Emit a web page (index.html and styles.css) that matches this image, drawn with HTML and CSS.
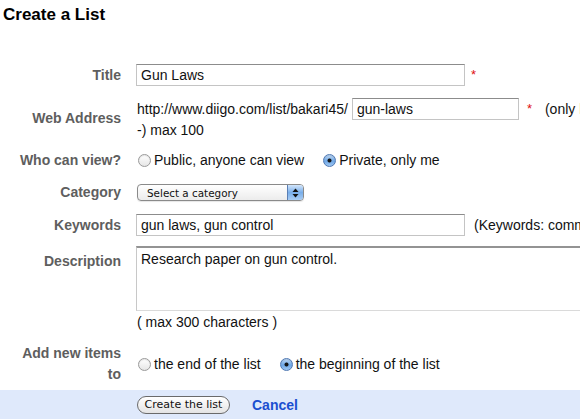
FILE: index.html
```html
<!DOCTYPE html>
<html>
<head>
<meta charset="utf-8">
<title>Create a List</title>
<link rel="stylesheet" href="styles.css">
</head>
<body>
<div class="page">
  <h1 class="heading">Create a List</h1>
  <div class="form">
    <div class="row row-title">
      <div class="lbl">Title</div>
      <div class="field">
        <input class="text wide" type="text" value="Gun Laws">
        <span class="req">*</span>
      </div>
    </div>

    <div class="row row-web">
      <div class="lbl">Web Address</div>
      <div class="field-block">
        <div class="line1">
          <span>http://www.diigo.com/list/bakari45/</span>
          <input class="text slug" type="text" value="gun-laws">
          <span class="req req-web">*</span>
          <span class="hint">(only letters, numbers, _ and</span>
        </div>
        <div class="line2">-) max 100</div>
      </div>
    </div>

    <div class="row row-who">
      <div class="lbl">Who can view?</div>
      <div class="field">
        <span class="opt"><span class="radio"></span><span>Public, anyone can view</span></span>
        <span class="opt opt-next"><span class="radio on"></span><span>Private, only me</span></span>
      </div>
    </div>

    <div class="row row-cat">
      <div class="lbl">Category</div>
      <div class="field">
        <div class="select">
          <span class="select-text">Select a category</span>
          <span class="select-btn">
            <svg width="7" height="10" viewBox="0 0 7 10"><path d="M3.5 0.5 L6.5 4 L0.5 4 Z" fill="#111"/><path d="M3.5 9.5 L6.5 6 L0.5 6 Z" fill="#111"/></svg>
          </span>
        </div>
      </div>
    </div>

    <div class="row row-kw">
      <div class="lbl">Keywords</div>
      <div class="field">
        <input class="text wide" type="text" value="gun laws, gun control">
        <span class="hint hint-kw">(Keywords: comma separated)</span>
      </div>
    </div>

    <div class="row row-desc">
      <div class="lbl lbl-desc">Description</div>
      <div class="field">
        <textarea class="area">Research paper on gun control.</textarea>
      </div>
    </div>

    <div class="row row-max">
      <div class="lbl"></div>
      <div class="field">( max 300 characters )</div>
    </div>

    <div class="row row-add">
      <div class="lbl lbl-add">Add new items<br>to</div>
      <div class="field">
        <span class="opt"><span class="radio"></span><span>the end of the list</span></span>
        <span class="opt opt-next"><span class="radio on"></span><span>the beginning of the list</span></span>
      </div>
    </div>
  </div>

  <div class="footer">
    <button class="btn" type="button">Create the list</button>
    <a class="cancel" href="#">Cancel</a>
  </div>
</div>
</body>
</html>
```

FILE: styles.css
```css
* {
  box-sizing: border-box;
}

body {
  margin: 0;
  font-family: "Liberation Sans", Arial, sans-serif;
  font-size: 14px;
  color: #111;
  background: #fff;
}

.page {
  width: 580px;
  height: 419px;
  overflow: hidden;
}

.heading {
  margin: 0;
  padding: 5px 3px 0;
  height: 25px;
  font-size: 17px;
  line-height: 20px;
  font-weight: bold;
  color: #000;
}

.form {
  margin-top: 39px;
}

.row {
  display: flex;
  align-items: center;
  white-space: nowrap;
}

.lbl {
  flex: 0 0 122px;
  padding-right: 1px;
  text-align: right;
  font-weight: bold;
  color: #5e5e5e;
  line-height: 17px;
}

.field {
  margin-left: 14px;
  display: flex;
  align-items: center;
}

.field-block {
  margin-left: 14px;
}

.text {
  height: 22px;
  margin: 0;
  padding: 0 4px;
  border: 1px solid #c4c4c4;
  border-top-color: #8c8c8c;
  border-radius: 0;
  font-family: "Liberation Sans", Arial, sans-serif;
  font-size: 14px;
  color: #111;
  background: #fff;
  outline: none;
}

.wide {
  width: 329px;
}

.req {
  color: #e01010;
  font-size: 13px;
  margin-left: 6px;
  position: relative;
  top: -1px;
}

/* Title row: align baselines */
.row-title {
  align-items: baseline;
}

.row-title .field {
  align-items: baseline;
}

/* Web address */
.row-web {
  margin-top: 12px;
}

.line1 {
  display: flex;
  align-items: center;
  height: 22px;
  padding-left: 1px;
}

.slug {
  width: 167px;
  margin-left: 4px;
}

.req-web {
  margin-left: 8px;
}

.hint {
  margin-left: 13px;
}

.line2 {
  line-height: 17px;
  padding-top: 2px;
  padding-left: 1px;
}

/* Who can view */
.row-who {
  margin-top: 12px;
  height: 18px;
}

.opt {
  display: inline-flex;
  align-items: center;
}

.opt-next {
  margin-left: 17px;
}

.radio {
  display: inline-block;
  width: 13px;
  height: 13px;
  margin: 0 3px 0 2px;
  border-radius: 50%;
  border: 1px solid #9a9a9a;
  background: linear-gradient(#ffffff, #e6e6e6);
  box-shadow: inset 0 1px 1px rgba(0, 0, 0, 0.1);
}

.radio.on {
  border-color: #4f78b3;
  background:
    radial-gradient(circle at 50% 50%, #151515 0, #151515 1.6px, rgba(0, 0, 0, 0) 2.4px),
    linear-gradient(#c3dcf7, #6ea7e6 55%, #a0c8f2);
}

/* Category */
.row-cat {
  margin-top: 14px;
  height: 19px;
}

.select {
  display: flex;
  align-items: center;
  width: 167px;
  height: 17px;
  margin-left: 1px;
  border: 1px solid #8a8a8a;
  border-radius: 4px;
  background: linear-gradient(#ffffff, #ececec);
  overflow: hidden;
  box-shadow: 0 1px 1px rgba(0, 0, 0, 0.1);
}

.select-text {
  padding-left: 9px;
  font-family: "DejaVu Sans", sans-serif;
  font-size: 10.4px;
  color: #111;
}

.select-btn {
  margin-left: auto;
  width: 16px;
  height: 100%;
  display: flex;
  align-items: center;
  justify-content: center;
  border-left: 1px solid #5b7fb4;
  background: linear-gradient(#d3e6fb, #79aeea 50%, #a9cdf4);
}

/* Keywords */
.row-kw {
  margin-top: 12px;
}

.hint-kw {
  margin-left: 9px;
}

/* Description */
.row-desc {
  margin-top: 10px;
  align-items: flex-start;
}

.lbl-desc {
  margin-top: 7px;
}

.area {
  display: block;
  width: 470px;
  height: 65px;
  margin: 0;
  padding: 3px 4px;
  border: 1px solid #c8c8c8;
  border-top: 2px solid #939393;
  border-bottom-color: #dadada;
  border-radius: 0;
  resize: none;
  font-family: "Liberation Sans", Arial, sans-serif;
  font-size: 14px;
  line-height: 17px;
  color: #111;
  outline: none;
  overflow: hidden;
}

/* Max chars */
.row-max {
  margin-top: 3px;
  line-height: 17px;
}

.row-max .field {
  padding-left: 1px;
}

/* Add new items */
.row-add {
  margin-top: 12px;
  height: 42px;
}

.lbl-add {
  line-height: 21px;
}

/* Footer */
.footer {
  margin-top: 5px;
  height: 40px;
  padding: 6px 0 0 137px;
  background: #dfe9fb;
  display: flex;
  align-items: flex-start;
}

.btn {
  width: 93px;
  height: 18px;
  margin: 0;
  padding: 0;
  border: 1px solid #6a6a6a;
  border-radius: 9px;
  background: linear-gradient(#ffffff, #e4e4e4);
  font-family: "DejaVu Sans", sans-serif;
  font-size: 11px;
  line-height: 16px;
  color: #111;
}

.cancel {
  margin-left: 22px;
  font-weight: bold;
  font-size: 14px;
  line-height: 18px;
  color: #1b4fd0;
  text-decoration: none;
}
```
